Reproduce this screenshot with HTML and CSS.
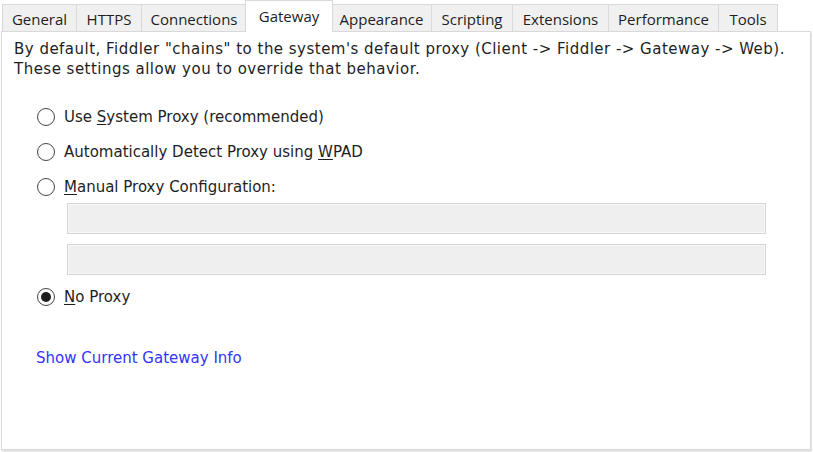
FILE: index.html
```html
<!DOCTYPE html>
<html>
<head>
<meta charset="utf-8">
<link rel="stylesheet" href="styles.css">
</head>
<body>
<div class="dialog">
  <div class="tabs">
    <div class="tab t-general">General</div>
    <div class="tab t-https">HTTPS</div>
    <div class="tab t-conn">Connections</div>
    <div class="tab active t-gateway">Gateway</div>
    <div class="tab t-appear">Appearance</div>
    <div class="tab t-script">Scripting</div>
    <div class="tab t-ext">Extensions</div>
    <div class="tab t-perf">Performance</div>
    <div class="tab t-tools">Tools</div>
  </div>
  <div class="panel">
    <p class="intro">By default, Fiddler "chains" to the system's default proxy (Client -&gt; Fiddler -&gt; Gateway -&gt; Web).<br>These settings allow you to override that behavior.</p>
    <div class="options">
      <label class="radio"><span class="dot"></span><span>Use <u>S</u>ystem Proxy (recommended)</span></label>
      <label class="radio"><span class="dot"></span><span>Automatically Detect Proxy using <u>W</u>PAD</span></label>
      <label class="radio"><span class="dot"></span><span><u>M</u>anual Proxy Configuration:</span></label>
      <div class="fields">
        <div class="field"></div>
        <div class="field"></div>
      </div>
      <label class="radio checked"><span class="dot"></span><span><u>N</u>o Proxy</span></label>
    </div>
    <a class="link">Show Current Gateway Info</a>
  </div>
</div>
</body>
</html>
```

FILE: styles.css
```css
html, body {
  margin: 0;
  padding: 0;
  background: #ffffff;
}
body {
  font-family: "DejaVu Sans", "Liberation Sans", sans-serif;
  font-size: 15px;
  line-height: 20px;
  color: #1e1e1e;
  width: 813px;
  height: 452px;
  overflow: hidden;
}
.dialog {
  padding: 0 0 0 1px;
}
.tabs {
  display: flex;
  align-items: flex-end;
  height: 31px;
  padding-left: 1px;
  position: relative;
  z-index: 2;
  font-family: "Open Sans", "Noto Sans", sans-serif;
  font-size: 15px;
}
.tab {
  box-sizing: border-box;
  height: 27px;
  border: 1px solid #d9d9d9;
  border-bottom: none;
  background: #f0f0f0;
  margin-right: -1px;
  display: flex;
  align-items: center;
  justify-content: center;
  padding-top: 1px;
  color: #1e1e1e;
  white-space: nowrap;
}
.tab.active {
  height: 32px;
  background: #ffffff;
  margin-bottom: -1px;
  margin-left: -1px;
  margin-right: -2px;
  padding-top: 0;
  padding-bottom: 2px;
  position: relative;
  z-index: 3;
}
.t-general { width: 75px; }
.t-https { width: 66px; }
.t-conn { width: 106px; }
.t-gateway { width: 88px; }
.t-appear { width: 101px; }
.t-script { width: 82px; }
.t-ext { width: 97px; }
.t-perf { width: 111px; }
.t-tools { width: 60px; }
.panel {
  box-sizing: border-box;
  width: 810px;
  height: 419px;
  border: 1px solid #d9d9d9;
  background: #ffffff;
  box-shadow: 1px 2px 0 #e4e4e4;
  padding: 7px 0 0 12px;
}
.intro {
  margin: 0;
  white-space: nowrap;
  letter-spacing: 0.48px;
}
.options {
  display: flex;
  flex-direction: column;
  padding-left: 23px;
  margin-top: 27px;
}
.radio {
  display: flex;
  align-items: center;
  gap: 9px;
  height: 22px;
  margin-bottom: 13px;
}
.dot {
  box-sizing: border-box;
  width: 18px;
  height: 18px;
  border: 1px solid #444444;
  border-radius: 50%;
  background: #ffffff;
  position: relative;
  flex: none;
}
.radio.checked .dot::after {
  content: "";
  position: absolute;
  left: 3px;
  top: 3px;
  width: 10px;
  height: 10px;
  border-radius: 50%;
  background: #1e1e1e;
}
.radio u {
  text-decoration-thickness: 1px;
  text-underline-offset: 2px;
}
.fields {
  display: flex;
  flex-direction: column;
  gap: 10px;
  padding-left: 30px;
  margin-top: -8px;
  margin-bottom: 11px;
}
.field {
  box-sizing: border-box;
  width: 699px;
  height: 31px;
  border: 1px solid #d4d4d4;
  box-shadow: inset 0 0 0 1px #f8f8f8;
  background: #efefef;
}
.link {
  display: block;
  margin-left: 22px;
  margin-top: 27px;
  color: #3333ff;
  text-decoration: none;
  cursor: pointer;
}
```
